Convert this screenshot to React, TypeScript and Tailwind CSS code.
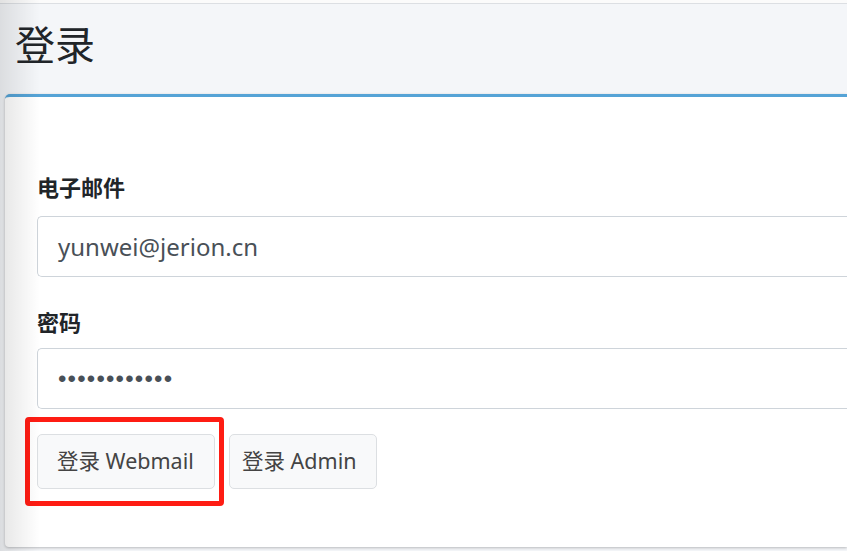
import React from "react";

export default function App() {
  const font = { fontFamily: '"Noto Sans", "Noto Sans CJK SC", sans-serif' };
  return (
    <div className="relative w-[847px] h-[551px] overflow-hidden bg-[#f4f6f9]" style={font}>
      <div className="h-[4px] bg-[#fbfbfb] border-b border-[#dcdfe3]" />
      <div className="h-[90px] flex items-center pl-[15px]">
        <h1 className="text-[40px] leading-none text-[#212529] font-normal -mt-[8px]">登录</h1>
      </div>
      <div className="ml-[5px] h-[453px] bg-white rounded-tl-[5px] rounded-bl-[4px] border-t-[3px] border-[#55a3d6] shadow-[0_1px_3px_rgba(0,0,0,0.25)] pl-[32px] pt-[77px]">
        <label className="block text-[22px] font-bold text-[#212529] leading-[26px]">电子邮件</label>
        <div className="mt-[16px] h-[61px] border border-[#ced4da] rounded-l-[5px] border-r-0 flex items-center pl-[20px] text-[24px] text-[#495057]">
          yunwei@jerion.cn
        </div>
        <label className="block mt-[32px] text-[22px] font-bold text-[#212529] leading-[26px]">密码</label>
        <div
          className="mt-[13px] h-[61px] border border-[#ced4da] rounded-l-[5px] border-r-0 flex items-center pl-[20px] text-[24px] text-[#495057] tracking-[1.2px]"
          style={{ fontFamily: '"Liberation Sans", sans-serif' }}
        >
          ••••••••••••
        </div>
        <div className="mt-[25px] flex gap-[14px]">
          <div className="relative">
            <button className="h-[55px] w-[178px] bg-[#f8f9fa] border border-[#dcdfe2] rounded-[5px] text-[21.5px] text-[#444] flex items-center justify-start pl-[19px]">
              登录 Webmail
            </button>
            <div className="pointer-events-none absolute left-[-12px] top-[-17px] w-[199px] h-[89px] border-[5px] border-[#fe1c13] rounded-[4px]" />
          </div>
          <button className="h-[55px] w-[148px] bg-[#f8f9fa] border border-[#dcdfe2] rounded-[5px] text-[21.5px] text-[#444] flex items-center justify-start pl-[12px]">
            登录 Admin
          </button>
        </div>
      </div>
      <div className="pointer-events-none absolute left-0 top-0 bottom-0 w-[40px] bg-gradient-to-r from-[rgba(0,0,0,0.1)] to-transparent" />
    </div>
  );
}
